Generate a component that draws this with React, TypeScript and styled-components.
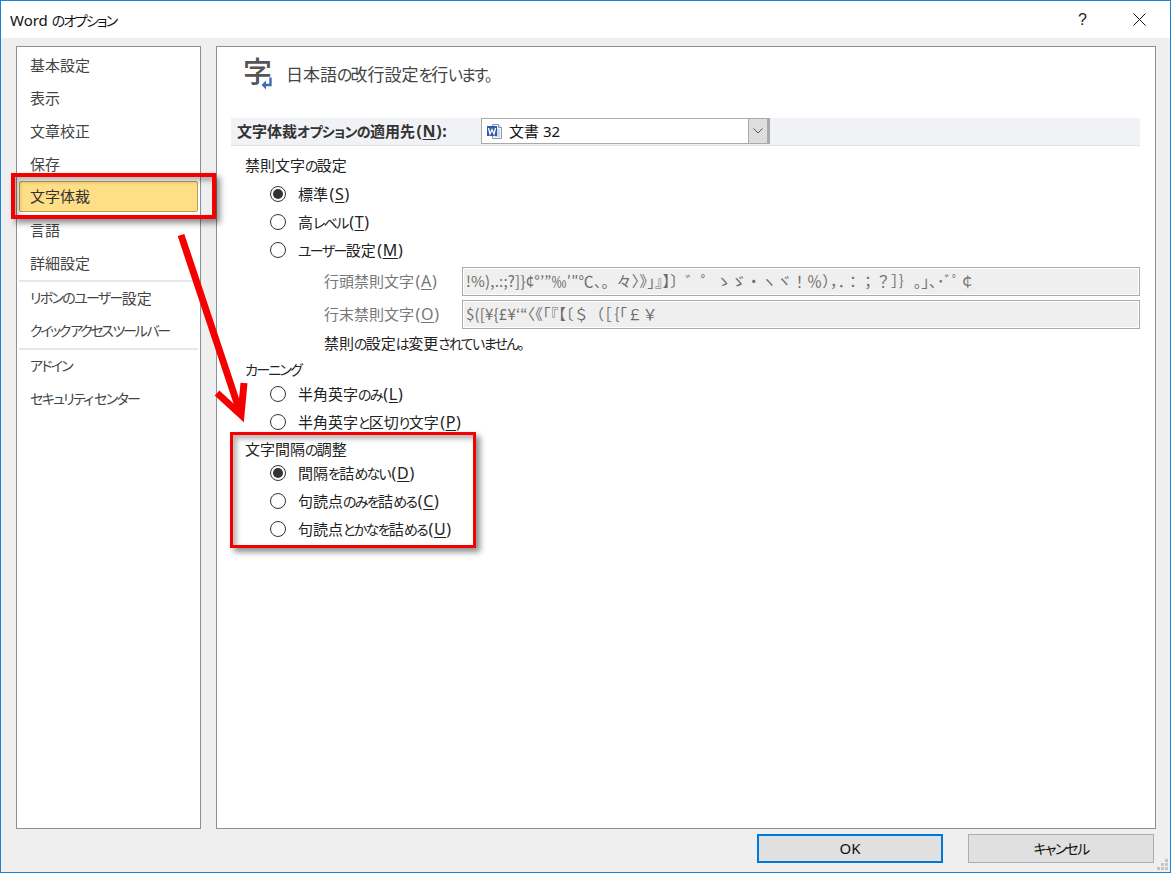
import React from "react";
import styled, { createGlobalStyle } from "styled-components";

const Global = createGlobalStyle`
  html, body { margin: 0; padding: 0; background: #fff; }
  body {
    font-family: "Noto Sans", "Noto Sans CJK JP", sans-serif;
    font-size: 15px;
    color: #222;
    font-feature-settings: "palt";
  }
  * { box-sizing: border-box; }
`;

const LEADING = "!%),.:;?]}¢°’”‰′″℃、。々〉》」』】〕゛゜ゝゞ・ヽヾ！％），．：；？］｝｡｣､･ﾞﾟ￠";
const TRAILING = "$([¥{£¥‘“〈《「『【〔＄（［｛｢￡￥";

const Window = styled.div`
  position: relative;
  width: 1171px;
  height: 873px;
  display: flex;
  flex-direction: column;
  background: #efefef;
  border: 1px solid #1883d7;
  overflow: hidden;
`;
const TitleBar = styled.div`
  height: 37px;
  flex: none;
  background: #fff;
  display: flex;
  align-items: center;
  justify-content: space-between;
  padding: 0 24px 0 9px;
  font-size: 15px;
  color: #111;
`;
const TitleButtons = styled.div`
  display: flex;
  align-items: center;
  gap: 46px;
`;
const HelpMark = styled.span`
  font-family: "Liberation Sans", sans-serif;
  font-size: 16px;
  color: #222;
`;
const Body = styled.div`
  flex: none;
  height: 791px;
  display: flex;
  gap: 15px;
  padding: 8px 14px 0 15px;
`;
const Sidebar = styled.nav`
  width: 185px;
  height: 783px;
  background: #fff;
  border: 1px solid #8b9097;
  padding: 2px 2px 0;
`;
const NavItem = styled.div<{ $active?: boolean; $tight?: boolean }>`
  height: 33px;
  display: flex;
  align-items: center;
  padding: 0 0 3px 11px;
  font-size: 15px;
  color: #444;
  white-space: pre;
  ${(p) => p.$tight && `--kana-spacing: -0.17em;`}
  ${(p) =>
    p.$active &&
    `background: #fedf86; border: 1px solid #c29a45; border-radius: 2px; padding-left: 10px; margin-bottom: 2px; height: 31px; color: #333;`}
`;
const NavDivider = styled.div`
  height: 2px;
  background: #e6e7ea;
`;
const Main = styled.main`
  width: 940px;
  height: 783px;
  background: #fff;
  border: 1px solid #8b9097;
  padding: 0 15px 0 14px;
`;
const Header = styled.header`
  height: 71px;
  display: flex;
  align-items: flex-start;
  padding: 0 0 0 12px;
`;
const HeaderIcon = styled.div`
  position: relative;
  width: 43px;
  height: 46px;
  margin-top: 8px;
  flex: none;
`;
const HeaderGlyph = styled.span`
  font-family: "Noto Sans CJK JP", sans-serif;
  font-size: 29px;
  line-height: 30px;
  color: #555;
  display: block;
  font-weight: 500;
`;
const ReturnArrow = styled.svg`
  position: absolute;
  left: 17px;
  top: 21px;
`;
const HeaderText = styled.span`
  margin-top: 16px;
  font-size: 17px;
  line-height: 24px;
  color: #444;
  white-space: nowrap;
`;
const Band = styled.div`
  height: 28px;
  background: #f0f2f6;
  border-bottom: 1px solid #e1e3e7;
  display: flex;
  align-items: flex-start;
  padding-left: 6px;
`;
const BandLabel = styled.label`
  --kana-spacing: -0.05em;
  width: 244px;
  height: 27px;
  display: flex;
  align-items: center;
  padding-bottom: 2px;
  font-weight: 700;
  font-size: 15px;
  color: #333;
  white-space: nowrap;
`;
const Combo = styled.div`
  width: 289px;
  height: 26px;
  background: #fff;
  border: 1px solid #aaa;
  display: flex;
  align-items: center;
  padding-left: 4px;
  font-size: 15px;
  color: #111;
`;
const ComboText = styled.span`
  margin: 0 0 2px 6px;
  flex: 1;
`;
const ComboButton = styled.div`
  width: 21px;
  height: 24px;
  background: #dedede;
  border-left: 1px solid #aaa;
  border-right: 2px solid #aaa;
  display: flex;
  align-items: center;
  justify-content: center;
`;
const Heading = styled.div<{ $top: number; $h?: number }>`
  margin-top: ${(p) => p.$top}px;
  height: ${(p) => p.$h ?? 24}px;
  padding: 0 0 3px 14px;
  display: flex;
  align-items: center;
  font-size: 15px;
  color: #222;
`;
const RadioGroup = styled.div<{ $top: number }>`
  margin-top: ${(p) => p.$top}px;
  display: flex;
  flex-direction: column;
  gap: 4px;
`;
const RadioRow = styled.div`
  height: 24px;
  display: flex;
  align-items: center;
  gap: 12px;
  padding-left: 39px;
  font-size: 15px;
  color: #222;
  white-space: nowrap;
`;
const RadioLabel = styled.span`
  margin-bottom: 1px;
`;
const RadioCircle = styled.span<{ $on?: boolean }>`
  width: 16px;
  height: 16px;
  flex: none;
  border: 1px solid #333;
  border-radius: 50%;
  background: #fff;
  display: flex;
  align-items: center;
  justify-content: center;
  &::after {
    content: "";
    display: ${(p) => (p.$on ? "block" : "none")};
    width: 10px;
    height: 10px;
    border-radius: 50%;
    background: #333;
  }
`;
const KanaRun = styled.span`
  font-size: 0.933em;
  letter-spacing: var(--kana-spacing, -0.12em);
`;
const Mnemonic = styled.span`
  margin-left: 1.5px;
  font-size: 16px;
  letter-spacing: 0.7px;
`;
const Mn = styled.span`
  text-decoration: underline;
  text-underline-offset: 2px;
`;
const CharFields = styled.div`
  margin-top: 5px;
  display: flex;
  flex-direction: column;
  gap: 4px;
`;
const FieldRow = styled.div`
  display: flex;
  align-items: center;
  padding-left: 93px;
`;
const FieldLabel = styled.span`
  width: 138px;
  flex: none;
  margin-bottom: 2px;
  font-size: 15px;
  color: #777;
  white-space: nowrap;
`;
const FieldBox = styled.div`
  flex: 1;
  height: 29px;
  background: #efefef;
  border: 1px solid #aaa;
  box-shadow: inset 0 0 0 1px #fff;
  display: flex;
  align-items: center;
  padding: 0 0 2px 3px;
  font-family: "Noto Sans CJK JP", sans-serif;
  font-feature-settings: normal;
  font-size: 15px;
  letter-spacing: 0.2px;
  color: #6d6d6d;
  white-space: nowrap;
  overflow: hidden;
`;
const Note = styled.div`
  margin-top: 3px;
  height: 24px;
  padding: 0 0 3px 93px;
  display: flex;
  align-items: center;
  font-size: 15px;
  color: #222;
`;
const Footer = styled.footer`
  position: relative;
  flex: 1;
  display: flex;
  justify-content: flex-end;
  gap: 25px;
  padding: 5px 16px 0 0;
`;
const DialogButton = styled.button<{ $primary?: boolean }>`
  width: 186px;
  height: 29px;
  padding: 0 0 2px;
  background: #e0e0e0;
  border: ${(p) => (p.$primary ? "2px solid #0078d7" : "1px solid #adadad")};
  font-family: inherit;
  font-feature-settings: inherit;
  font-size: 15px;
  color: #111;
`;
const Grip = styled.svg`
  position: absolute;
  right: 1px;
  bottom: 1px;
`;
const Callout = styled.div<{ $l: number; $t: number; $w: number; $h: number; $b: number }>`
  position: absolute;
  left: ${(p) => p.$l}px;
  top: ${(p) => p.$t}px;
  width: ${(p) => p.$w}px;
  height: ${(p) => p.$h}px;
  border: ${(p) => p.$b}px solid #f50000;
  box-shadow: 4px 4px 6px rgba(0, 0, 0, 0.45), inset 4px 4px 5px rgba(0, 0, 0, 0.28);
  pointer-events: none;
`;
const ArrowOverlay = styled.svg`
  position: absolute;
  left: 0;
  top: 0;
  pointer-events: none;
`;

const Jp = ({ children }: { children: string }) => (
  <>
    {children.split(/([\u3040-\u30ff\u3002]+(?: [\u3040-\u30ff]+)*)/).map((part, i) =>
      i % 2 ? <KanaRun key={i}>{part}</KanaRun> : part
    )}
  </>
);

const WordDocIcon = () => (
  <svg width="17" height="17" viewBox="0 0 17 17">
    <path d="M6.5 1.5H12.5L15.5 4.5V15.5H6.5Z" fill="#f2f5fa" stroke="#8a98ad" />
    <path d="M12.5 1.5V4.5H15.5" fill="#dfe6f0" stroke="#8a98ad" />
    <path d="M9 7H14M9 9H14M9 11H14M9 13H14" stroke="#a9b7cb" />
    <rect x="1" y="3" width="10" height="10" fill="#2a5caa" />
    <path d="M2.5 5L4 11L6 6.5L8 11L9.5 5" fill="none" stroke="#fff" strokeWidth="1.3" />
  </svg>
);

const Option = ({ pre, mn, on }: { pre: string; mn: string; on?: boolean }) => (
  <RadioRow>
    <RadioCircle $on={on} />
    <RadioLabel>
      <Jp>{pre}</Jp>
      <Mnemonic>
        (<Mn>{mn}</Mn>)
      </Mnemonic>
    </RadioLabel>
  </RadioRow>
);

export default function App() {
  return (
    <>
      <Global />
      <Window>
        <TitleBar>
          <span>
            Word <Jp>のオプション</Jp>
          </span>
          <TitleButtons>
            <HelpMark>?</HelpMark>
            <svg width="13" height="13" viewBox="0 0 13 13">
              <path d="M0.5 0.5L12.5 12.5M12.5 0.5L0.5 12.5" stroke="#111" strokeWidth="1" fill="none" />
            </svg>
          </TitleButtons>
        </TitleBar>
        <Body>
          <Sidebar>
            <NavItem>基本設定</NavItem>
            <NavItem>表示</NavItem>
            <NavItem>文章校正</NavItem>
            <NavItem>保存</NavItem>
            <NavItem $active>文字体裁</NavItem>
            <NavItem>言語</NavItem>
            <NavItem>詳細設定</NavItem>
            <NavDivider />
            <NavItem><Jp>リボンのユーザー設定</Jp></NavItem>
            <NavItem $tight><Jp>クイック アクセス ツール バー</Jp></NavItem>
            <NavDivider />
            <NavItem><Jp>アドイン</Jp></NavItem>
            <NavItem><Jp>セキュリティ センター</Jp></NavItem>
          </Sidebar>
          <Main>
            <Header>
              <HeaderIcon>
                <HeaderGlyph>字</HeaderGlyph>
                <ReturnArrow width="14" height="15" viewBox="0 0 14 15">
                  <path d="M10.5 1V9H4" fill="none" stroke="#fff" strokeWidth="4" />
                  <path d="M10.5 1.5V9H4" fill="none" stroke="#3f6db3" strokeWidth="2.4" />
                  <path d="M6 4.5L1.5 9L6 13.5Z" fill="#3f6db3" />
                </ReturnArrow>
              </HeaderIcon>
              <HeaderText><Jp>日本語の改行設定を行います。</Jp></HeaderText>
            </Header>
            <Band>
              <BandLabel>
                <span>
                  <Jp>文字体裁オプションの適用先</Jp>
                  <Mnemonic>
                    (<Mn>N</Mn>):
                  </Mnemonic>
                </span>
              </BandLabel>
              <Combo>
                <WordDocIcon />
                <ComboText>文書 32</ComboText>
                <ComboButton>
                  <svg width="10" height="6" viewBox="0 0 10 6">
                    <path d="M0.5 0.5L5 5L9.5 0.5" fill="none" stroke="#555" />
                  </svg>
                </ComboButton>
              </Combo>
            </Band>
            <Heading $top={8}><span><Jp>禁則文字の設定</Jp></span></Heading>
            <RadioGroup $top={4}>
              <Option pre="標準" mn="S" on />
              <Option pre="高レベル" mn="T" />
              <Option pre="ユーザー設定" mn="M" />
            </RadioGroup>
            <CharFields>
              <FieldRow>
                <FieldLabel>
                  行頭禁則文字
                  <Mnemonic>
                    (<Mn>A</Mn>)
                  </Mnemonic>
                </FieldLabel>
                <FieldBox>{LEADING}</FieldBox>
              </FieldRow>
              <FieldRow>
                <FieldLabel>
                  行末禁則文字
                  <Mnemonic>
                    (<Mn>O</Mn>)
                  </Mnemonic>
                </FieldLabel>
                <FieldBox>{TRAILING}</FieldBox>
              </FieldRow>
            </CharFields>
            <Note><span><Jp>禁則の設定は変更されていません。</Jp></span></Note>
            <Heading $top={2}><span><Jp>カーニング</Jp></span></Heading>
            <RadioGroup $top={0}>
              <Option pre="半角英字のみ" mn="L" />
              <Option pre="半角英字と区切り文字" mn="P" />
            </RadioGroup>
            <Heading $top={4} $h={23}><span><Jp>文字間隔の調整</Jp></span></Heading>
            <RadioGroup $top={0}>
              <Option pre="間隔を詰めない" mn="D" on />
              <Option pre="句読点のみを詰める" mn="C" />
              <Option pre="句読点とかなを詰める" mn="U" />
            </RadioGroup>
          </Main>
        </Body>
        <Footer>
          <DialogButton $primary>OK</DialogButton>
          <DialogButton><Jp>キャンセル</Jp></DialogButton>
          <Grip width="12" height="12" viewBox="0 0 12 12">
            <path d="M8 0h3v3H8zM4 4h3v3H4zM8 4h3v3H8zM0 8h3v3H0zM4 8h3v3H4zM8 8h3v3H8z" fill="#c4c4c4" />
          </Grip>
        </Footer>
        <Callout $l={10} $t={172} $w={205} $h={46} $b={4} />
        <Callout $l={229} $t={431} $w={246} $h={116} $b={3} />
        <ArrowOverlay width="1171" height="873" viewBox="0 0 1171 873">
          <path d="M180 234L240 414" stroke="#f50000" strokeWidth="7" fill="none" />
          <path d="M216 392L240 414L243 382" stroke="#f50000" strokeWidth="7" fill="none" />
        </ArrowOverlay>
      </Window>
    </>
  );
}
